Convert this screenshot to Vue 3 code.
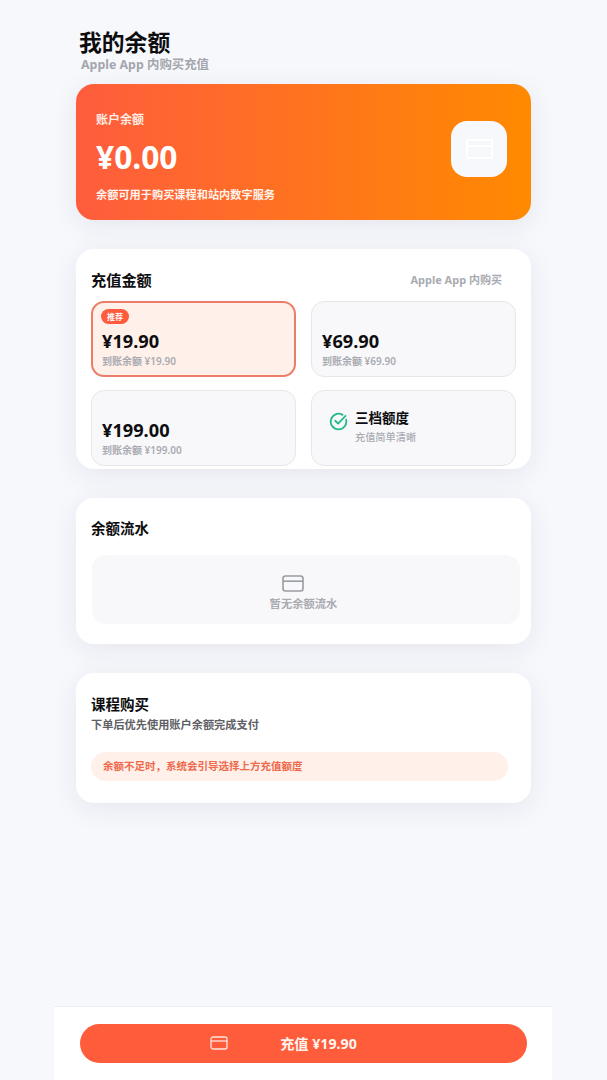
<template>
  <div class="page">
    <div class="phone">
      <main class="content">
        <header class="head">
          <h1>我的余额</h1>
          <p>Apple App 内购买充值</p>
        </header>

        <!-- 余额卡片 -->
        <section class="hero">
          <div class="hero-text">
            <div class="hero-label">账户余额</div>
            <div class="hero-amount">¥0.00</div>
            <div class="hero-desc">余额可用于购买课程和站内数字服务</div>
          </div>
          <div class="hero-icon">
            <svg width="27" height="20" viewBox="0 0 27 20" fill="none" stroke="#ffffff" stroke-width="2">
              <rect x="1" y="1" width="25" height="18" rx="1" />
              <path d="M1 7h25" />
            </svg>
          </div>
        </section>

        <!-- 充值金额 -->
        <section class="card card-amount">
          <div class="card-head">
            <h2>充值金额</h2>
            <span class="card-tag">Apple App 内购买</span>
          </div>
          <div class="options">
            <div
              v-for="item in options"
              :key="item.price"
              class="option"
              :class="{ active: item.price === selected }"
            >
              <span v-if="item.badge" class="badge">{{ item.badge }}</span>
              <div class="price">¥{{ item.price }}</div>
              <div class="arrive">到账余额 ¥{{ item.price }}</div>
            </div>
            <div class="option note">
              <svg class="check" width="19" height="19" viewBox="0 0 20 20" fill="none" stroke="#25b98a" stroke-width="1.9" stroke-linecap="round" stroke-linejoin="round">
                <path d="M18 8.2A8.2 8.2 0 1 1 14.2 3" />
                <path d="M6.6 9.2l3 3 7.8-8" />
              </svg>
              <div>
                <div class="note-title">三档额度</div>
                <div class="note-sub">充值简单清晰</div>
              </div>
            </div>
          </div>
        </section>

        <!-- 余额流水 -->
        <section class="card card-flow">
          <h2>余额流水</h2>
          <div class="empty">
            <svg width="22" height="17" viewBox="0 0 22 17" fill="none" stroke="#9a9ca3" stroke-width="1.6">
              <rect x="1" y="1" width="20" height="15" rx="2.5" />
              <path d="M1 6.2h20" />
            </svg>
            <span>暂无余额流水</span>
          </div>
        </section>

        <!-- 课程购买 -->
        <section class="card card-course">
          <h2>课程购买</h2>
          <p class="course-desc">下单后优先使用账户余额完成支付</p>
          <div class="tip">余额不足时，系统会引导选择上方充值额度</div>
        </section>
      </main>

      <footer class="footer">
        <button class="pay-btn">
          <svg width="18" height="14" viewBox="0 0 18 14" fill="none" stroke="#ffe6de" stroke-width="1.3">
            <rect x="1" y="1" width="16" height="12" rx="2" />
            <path d="M1 5h16" />
          </svg>
          <span>充值 ¥{{ selected }}</span>
        </button>
      </footer>
    </div>
  </div>
</template>

<script setup>
import { ref } from 'vue'

const selected = ref('19.90')

const options = [
  { price: '19.90', badge: '推荐' },
  { price: '69.90' },
  { price: '199.00' }
]
</script>

<style>
body {
  background: #f7f8fc;
}
</style>

<style scoped>
.page {
  min-height: 1080px;
  background: #f7f8fc;
  font-family: "Noto Sans", "Noto Sans CJK SC", sans-serif;
  color: #0d0d0f;
}

.phone {
  width: 498px;
  margin-left: 54px;
  min-height: 1080px;
  display: flex;
  flex-direction: column;
}

.content {
  flex: 1;
  padding: 29px 21px 0 22px;
}

.head {
  height: 55px;
  padding-left: 3px;
}

.head h1 {
  margin: 0;
  font-size: 22.8px;
  line-height: 28px;
  font-weight: 700;
}

.head p {
  margin: 1px 0 0 2px;
  font-size: 12.4px;
  line-height: 14px;
  font-weight: 700;
  color: #a3a6ad;
}

.hero {
  height: 136px;
  box-sizing: border-box;
  padding: 10px 24px 0 20px;
  border-radius: 18px;
  background: linear-gradient(90deg, #ff5c3e, #ff8a00);
  box-shadow: 0 6px 28px rgba(30, 40, 80, 0.08);
  display: flex;
  align-items: center;
  justify-content: space-between;
  color: #fff;
}

.hero-label {
  font-size: 12px;
  line-height: 16px;
  font-weight: 600;
  color: #ffeee6;
}

.hero-amount {
  margin-top: 7px;
  font-size: 31.7px;
  line-height: 44px;
  font-weight: 700;
}

.hero-desc {
  margin-top: 8px;
  font-size: 11.2px;
  line-height: 16px;
  font-weight: 600;
  color: #fff4ee;
}

.hero-icon {
  width: 56px;
  height: 56px;
  margin-bottom: 16px;
  border-radius: 16px;
  background: #f7f8fc;
  display: flex;
  align-items: center;
  justify-content: center;
}

.card {
  margin-top: 29px;
  background: #fff;
  border-radius: 18px;
  box-shadow: 0 6px 28px rgba(30, 40, 80, 0.08);
  box-sizing: border-box;
  padding: 0 15px;
}

.card h2 {
  margin: 0;
  font-size: 14.5px;
  line-height: 20px;
  font-weight: 700;
}

.card-amount {
  height: 220px;
  padding-top: 21px;
}

.card-amount h2 {
  font-size: 15.2px;
  line-height: 20px;
  margin-top: -1px;
}

.card-head {
  height: 20px;
  display: flex;
  align-items: center;
  justify-content: space-between;
  padding-right: 14px;
}

.card-tag {
  margin-top: -3px;
  font-size: 11px;
  font-weight: 700;
  color: #a9abb1;
}

.options {
  margin-top: 11px;
  display: grid;
  grid-template-columns: 205px 205px;
  grid-auto-rows: 76px;
  column-gap: 15px;
  row-gap: 13px;
}

.option {
  position: relative;
  box-sizing: border-box;
  padding: 28px 10px 0;
  background: #f8f8fb;
  border: 1px solid #e6e7ea;
  border-radius: 13px;
}

.option.active {
  background: #fff0ea;
  border: 2px solid #ec7e69;
  padding: 27px 9px 0;
}

.badge {
  position: absolute;
  left: 8px;
  top: 6px;
  width: 28px;
  height: 15px;
  border-radius: 8px;
  background: #ff5c3e;
  color: #fff;
  font-size: 8px;
  line-height: 15px;
  font-weight: 700;
  text-align: center;
}

.price {
  font-size: 18.2px;
  line-height: 22px;
  font-weight: 700;
}

.arrive {
  margin-top: 2px;
  font-size: 10px;
  line-height: 14px;
  font-weight: 600;
  color: #a9abb1;
}

.option.note {
  padding: 17px 0 0 17px;
  display: flex;
  align-items: flex-start;
  gap: 7px;
}

.check {
  flex: none;
  margin-top: 4px;
}

.note-title {
  font-size: 13.5px;
  line-height: 20px;
  font-weight: 700;
}

.note-sub {
  margin-top: 2px;
  font-size: 10.2px;
  line-height: 14px;
  font-weight: 500;
  color: #a9abb1;
}

.card-flow {
  height: 146px;
  padding-top: 20px;
}

.empty {
  margin: 17px -4px 0 1px;
  height: 69px;
  box-sizing: border-box;
  padding: 6px 5px 0 0;
  border-radius: 14px;
  background: #f8f8fb;
  display: flex;
  flex-direction: column;
  align-items: center;
  justify-content: center;
  gap: 5px;
  color: #a9abb1;
  font-size: 11.3px;
  line-height: 14px;
  font-weight: 600;
}

.empty svg {
  margin-right: 21px;
}

.card-course {
  height: 130px;
  padding-top: 22px;
}

.card-course h2 {
  margin-top: -1px;
}

.course-desc {
  margin: 2px 0 0;
  font-size: 11.2px;
  line-height: 18px;
  font-weight: 600;
  color: #5e6066;
}

.tip {
  margin-top: 18px;
  width: 417px;
  height: 29px;
  box-sizing: border-box;
  padding-left: 12px;
  border-radius: 15px;
  background: #fff0ea;
  color: #ee6a4c;
  font-size: 10.5px;
  line-height: 29px;
  font-weight: 700;
}

.footer {
  height: 74px;
  box-sizing: border-box;
  background: #fff;
  border-top: 1px solid #eceef2;
  padding: 17px 25px 0 26px;
}

.pay-btn {
  width: 100%;
  height: 39px;
  border: none;
  border-radius: 20px;
  background: #ff5c3c;
  color: #fff4ef;
  font-family: inherit;
  font-size: 14.2px;
  font-weight: 700;
  display: flex;
  align-items: center;
  justify-content: center;
  gap: 52px;
  padding: 0 40px 2px 0;
}
</style>
